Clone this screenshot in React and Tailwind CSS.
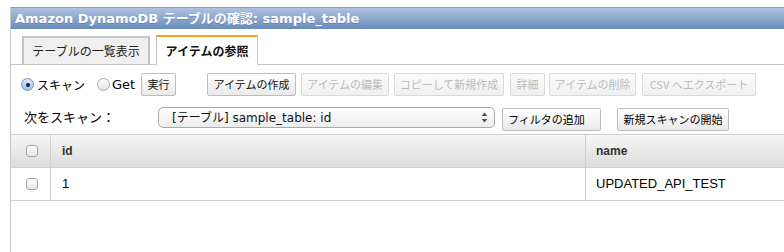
import React from "react";

const UI = { fontFamily: '"DejaVu Sans", "Noto Sans CJK JP", sans-serif' };
const JP = { fontFamily: '"Noto Sans CJK JP", "DejaVu Sans", sans-serif' };
const AR = { fontFamily: '"Liberation Sans", Arial, "Noto Sans CJK JP", sans-serif' };

function Btn({ children, w, disabled, className = "" }) {
  return (
    <div
      style={{ ...JP, width: w }}
      className={
        "h-[23px] flex items-center justify-center rounded-[2px] border text-[11px] leading-none shrink-0 " +
        (disabled
          ? "border-[#dadada] bg-gradient-to-b from-[#fbfbfb] to-[#f0f0f0] text-[#bcbcbc] "
          : "border-[#bdbdbd] bg-gradient-to-b from-[#ffffff] to-[#e9e9e9] text-[#111] ") +
        className
      }
    >
      {children}
    </div>
  );
}

function Radio({ checked }) {
  return checked ? (
    <div className="w-[13px] h-[13px] rounded-full border border-[#6f93c2] bg-gradient-to-b from-[#dbe9f8] to-[#9cc2ea] flex items-center justify-center shrink-0">
      <div className="w-[4px] h-[4px] rounded-full bg-[#1d2633]" />
    </div>
  ) : (
    <div className="w-[13px] h-[13px] rounded-full border border-[#a9a9a9] bg-gradient-to-b from-[#ffffff] to-[#e3e3e3] shrink-0" />
  );
}

function Check() {
  return (
    <div className="ml-[2px] w-[12px] h-[12px] rounded-[3px] border border-[#a6a6a6] bg-gradient-to-b from-[#ffffff] to-[#e4e4e4]" />
  );
}

export default function App() {
  return (
    <div className="w-[784px] h-[252px] bg-white pt-[7px] pl-[10px] overflow-hidden text-black" style={UI}>
      <div className="border-l border-[#c6c6c6] h-[245px] flex flex-col">
        {/* title bar */}
        <div className="h-[22px] shrink-0 border-t border-[#7f9bc4] bg-gradient-to-b from-[#aec2de] to-[#6a8cbc] flex items-center pl-[4px]">
          <span className="text-white font-bold text-[13px] leading-none [text-shadow:0_1px_0_rgba(60,80,120,0.35)]">
            Amazon DynamoDB テーブルの確認: sample_table
          </span>
        </div>

        {/* tabs */}
        <div className="h-[36px] shrink-0 border-b border-[#c6c6c6] flex items-end pl-[11px]">
          <div
            style={JP}
            className="w-[128px] h-[28px] border-2 border-b-0 border-[#c4c4c4] bg-[#efefef] flex items-center justify-center text-[12px] text-[#222]"
          >
            テーブルの一覧表示
          </div>
          <div
            style={JP}
            className="ml-[6px] w-[102px] h-[30px] -mb-px border-t-2 border-t-[#f3a21c] border-x border-x-[#c6c6c6] bg-white flex items-center justify-center text-[12px] font-bold text-[#111]"
          >
            アイテムの参照
          </div>
        </div>

        {/* toolbar row 1 */}
        <div className="mt-[8px] h-[23px] shrink-0 flex items-center pl-[10px]">
          <Radio checked />
          <span style={JP} className="ml-[3px] w-[48px] text-[12px] leading-none">スキャン</span>
          <div className="ml-[12px]">
            <Radio />
          </div>
          <span className="ml-[2px] w-[23px] text-[13px] leading-none">Get</span>
          <Btn w={35} className="ml-[6px]">実行</Btn>
          <Btn w={89} className="ml-[31px]">アイテムの作成</Btn>
          <Btn w={88} className="ml-[5px]" disabled>アイテムの編集</Btn>
          <Btn w={110} className="ml-[5px]" disabled>コピーして新規作成</Btn>
          <Btn w={35} className="ml-[6px]" disabled>詳細</Btn>
          <Btn w={87} className="ml-[4px]" disabled>アイテムの削除</Btn>
          <Btn w={114} className="ml-[6px]" disabled>CSV へエクスポート</Btn>
        </div>

        {/* toolbar row 2 */}
        <div className="mt-[11px] h-[24px] shrink-0 flex items-start pl-[13px]">
          <span style={JP} className="mt-[3px] text-[13px] leading-none w-[134px]">次をスキャン：</span>
          <div className="w-[337px] h-[21px] rounded-[5px] border border-[#a9a9a9] bg-gradient-to-b from-[#ffffff] to-[#ececec] flex items-center pl-[13px] pr-[6px]">
            <span className="text-[12px] leading-none text-[#111]">[テーブル] sample_table: id</span>
            <svg className="ml-auto" width="7" height="11" viewBox="0 0 7 11">
              <path d="M3.5 0.5 L6.5 4 L0.5 4 Z" fill="#555" />
              <path d="M3.5 10.5 L6.5 7 L0.5 7 Z" fill="#555" />
            </svg>
          </div>
          <div
            style={JP}
            className="ml-[7px] mt-[1px] w-[99px] h-[23px] rounded-[2px] border border-[#bdbdbd] bg-gradient-to-b from-[#ffffff] to-[#e9e9e9] flex items-center pl-[5px] text-[11px] leading-none"
          >
            フィルタの追加
          </div>
          <div
            style={JP}
            className="ml-[16px] mt-[1px] w-[112px] h-[23px] rounded-[2px] border border-[#bdbdbd] bg-gradient-to-b from-[#ffffff] to-[#e9e9e9] flex items-center justify-center text-[11px] leading-none"
          >
            新規スキャンの開始
          </div>
        </div>

        {/* table */}
        <div className="mt-[3px] border-t border-[#cfcfcf]" style={AR}>
          <div className="h-[33px] flex border-b border-[#cfcfcf] bg-gradient-to-b from-[#f6f6f6] to-[#dcdcdc]">
            <div className="w-[40px] border-r border-[#cfcfcf] flex items-center justify-center">
              <Check />
            </div>
            <div className="w-[535px] border-r border-[#cfcfcf] flex items-center pl-[11px] text-[12px] font-bold text-[#333]">
              id
            </div>
            <div className="flex-1 flex items-center pl-[10px] text-[12px] font-bold text-[#333]">
              name
            </div>
          </div>
          <div className="h-[33px] flex border-b border-[#cfcfcf] bg-white">
            <div className="w-[40px] border-r border-[#cfcfcf] flex items-center justify-center">
              <Check />
            </div>
            <div className="w-[535px] border-r border-[#cfcfcf] flex items-center pl-[11px] text-[13px] text-black">
              1
            </div>
            <div className="flex-1 flex items-center pl-[10px] text-[13px] text-black">
              UPDATED_API_TEST
            </div>
          </div>
        </div>
      </div>
    </div>
  );
}
